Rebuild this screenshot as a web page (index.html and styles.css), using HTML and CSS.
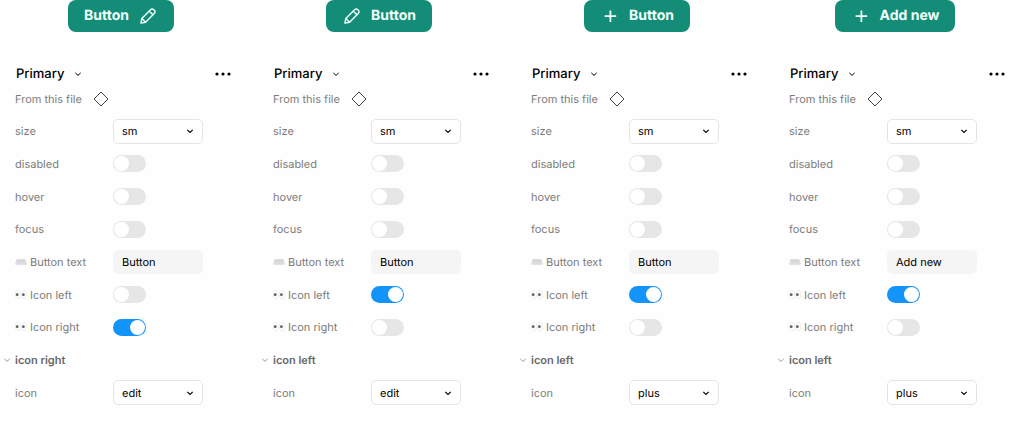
FILE: index.html
```html
<!DOCTYPE html>
<html lang="en">
<head>
<meta charset="utf-8">
<meta name="viewport" content="width=device-width, initial-scale=1">
<title>Button component properties</title>
<link rel="stylesheet" href="styles.css">
</head>
<body>
<svg class="sprite" aria-hidden="true">
  <symbol id="pencil" viewBox="-2 -2 20 20"><path d="M.9 15.100l.9-4.700L10.800 1.500a1.900 1.900 0 0 1 2.700 0l1 1a1.900 1.900 0 0 1 0 2.700L5.600 14.200zM9.200 3.100l3.700 3.700M1.800 10.400l3.800 3.800"/></symbol>
  <symbol id="plus" viewBox="-2 -2 20 20"><path d="M8.400 2.400v11.600M2.600 8.200h11.600"/></symbol>
  <symbol id="chevron" viewBox="0 0 8 8"><path d="M1.300 2.900L4 5.400l2.700-2.500"/></symbol>
  <symbol id="dots" viewBox="0 0 16 4"><circle cx="2" cy="2" r="1.600"/><circle cx="8" cy="2" r="1.600"/><circle cx="14" cy="2" r="1.600"/></symbol>
  <symbol id="diamond" viewBox="0 0 16 16"><path d="M8 1l7 7-7 7-7-7z"/></symbol>
  <symbol id="keyboard" viewBox="0 0 12 12"><path d="M1.500 3h9l1.200 4.500H.3z" fill="#e2e2e2"/><path d="M.3 7.500h11.400v1H.3z" fill="#c8c8c8"/><path d="M2 4.200h8M1.700 5.700h8.600" fill="none" stroke="#c0c0c0" stroke-width=".7" stroke-dasharray="1 .5"/></symbol>
  <symbol id="eyes" viewBox="0 0 12 12"><g fill="#fcfcfc" stroke="#e2e2e2" stroke-width=".6"><ellipse cx="3" cy="5.500" rx="2.500" ry="4.200"/><ellipse cx="9.200" cy="5.500" rx="2.500" ry="4.200"/></g><g fill="#606060"><circle cx="2.200" cy="5.700" r="1.400"/><circle cx="8.400" cy="5.700" r="1.400"/></g></symbol>
</svg>
<main class="board">
  <section class="variant">
    <button class="btn" type="button">Button<svg class="btn-icon"><use href="#pencil"/></svg></button>
    <header class="head">
      <button class="title" type="button">Primary<svg class="chevron"><use href="#chevron"/></svg></button>
      <button class="more" type="button" aria-label="More"><svg class="dots"><use href="#dots"/></svg></button>
    </header>
    <p class="source">From this file<svg class="diamond"><use href="#diamond"/></svg></p>
    <div class="rows">
      <div class="row"><label for="size1">size</label><span class="select"><select id="size1"><option>sm</option></select><svg class="chevron"><use href="#chevron"/></svg></span></div>
      <div class="row"><label for="disabled1">disabled</label><input class="toggle" id="disabled1" type="checkbox" role="switch"></div>
      <div class="row"><label for="hover1">hover</label><input class="toggle" id="hover1" type="checkbox" role="switch"></div>
      <div class="row"><label for="focus1">focus</label><input class="toggle" id="focus1" type="checkbox" role="switch"></div>
      <div class="row"><label for="text1"><svg class="glyph"><use href="#keyboard"/></svg>Button text</label><input class="field" id="text1" type="text" value="Button"></div>
      <div class="row"><label for="left1"><svg class="glyph"><use href="#eyes"/></svg>Icon left</label><input class="toggle" id="left1" type="checkbox" role="switch"></div>
      <div class="row"><label for="right1"><svg class="glyph"><use href="#eyes"/></svg>Icon right</label><input class="toggle" id="right1" type="checkbox" role="switch" checked></div>
      <button class="group" type="button"><svg class="chevron"><use href="#chevron"/></svg>icon right</button>
      <div class="row"><label for="icon1">icon</label><span class="select"><select id="icon1"><option>edit</option></select><svg class="chevron"><use href="#chevron"/></svg></span></div>
    </div>
  </section>
  <section class="variant">
    <button class="btn" type="button"><svg class="btn-icon"><use href="#pencil"/></svg>Button</button>
    <header class="head">
      <button class="title" type="button">Primary<svg class="chevron"><use href="#chevron"/></svg></button>
      <button class="more" type="button" aria-label="More"><svg class="dots"><use href="#dots"/></svg></button>
    </header>
    <p class="source">From this file<svg class="diamond"><use href="#diamond"/></svg></p>
    <div class="rows">
      <div class="row"><label for="size2">size</label><span class="select"><select id="size2"><option>sm</option></select><svg class="chevron"><use href="#chevron"/></svg></span></div>
      <div class="row"><label for="disabled2">disabled</label><input class="toggle" id="disabled2" type="checkbox" role="switch"></div>
      <div class="row"><label for="hover2">hover</label><input class="toggle" id="hover2" type="checkbox" role="switch"></div>
      <div class="row"><label for="focus2">focus</label><input class="toggle" id="focus2" type="checkbox" role="switch"></div>
      <div class="row"><label for="text2"><svg class="glyph"><use href="#keyboard"/></svg>Button text</label><input class="field" id="text2" type="text" value="Button"></div>
      <div class="row"><label for="left2"><svg class="glyph"><use href="#eyes"/></svg>Icon left</label><input class="toggle" id="left2" type="checkbox" role="switch" checked></div>
      <div class="row"><label for="right2"><svg class="glyph"><use href="#eyes"/></svg>Icon right</label><input class="toggle" id="right2" type="checkbox" role="switch"></div>
      <button class="group" type="button"><svg class="chevron"><use href="#chevron"/></svg>icon left</button>
      <div class="row"><label for="icon2">icon</label><span class="select"><select id="icon2"><option>edit</option></select><svg class="chevron"><use href="#chevron"/></svg></span></div>
    </div>
  </section>
  <section class="variant">
    <button class="btn" type="button"><svg class="btn-icon bold"><use href="#plus"/></svg>Button</button>
    <header class="head">
      <button class="title" type="button">Primary<svg class="chevron"><use href="#chevron"/></svg></button>
      <button class="more" type="button" aria-label="More"><svg class="dots"><use href="#dots"/></svg></button>
    </header>
    <p class="source">From this file<svg class="diamond"><use href="#diamond"/></svg></p>
    <div class="rows">
      <div class="row"><label for="size3">size</label><span class="select"><select id="size3"><option>sm</option></select><svg class="chevron"><use href="#chevron"/></svg></span></div>
      <div class="row"><label for="disabled3">disabled</label><input class="toggle" id="disabled3" type="checkbox" role="switch"></div>
      <div class="row"><label for="hover3">hover</label><input class="toggle" id="hover3" type="checkbox" role="switch"></div>
      <div class="row"><label for="focus3">focus</label><input class="toggle" id="focus3" type="checkbox" role="switch"></div>
      <div class="row"><label for="text3"><svg class="glyph"><use href="#keyboard"/></svg>Button text</label><input class="field" id="text3" type="text" value="Button"></div>
      <div class="row"><label for="left3"><svg class="glyph"><use href="#eyes"/></svg>Icon left</label><input class="toggle" id="left3" type="checkbox" role="switch" checked></div>
      <div class="row"><label for="right3"><svg class="glyph"><use href="#eyes"/></svg>Icon right</label><input class="toggle" id="right3" type="checkbox" role="switch"></div>
      <button class="group" type="button"><svg class="chevron"><use href="#chevron"/></svg>icon left</button>
      <div class="row"><label for="icon3">icon</label><span class="select"><select id="icon3"><option>plus</option></select><svg class="chevron"><use href="#chevron"/></svg></span></div>
    </div>
  </section>
  <section class="variant">
    <button class="btn" type="button"><svg class="btn-icon bold"><use href="#plus"/></svg>Add new</button>
    <header class="head">
      <button class="title" type="button">Primary<svg class="chevron"><use href="#chevron"/></svg></button>
      <button class="more" type="button" aria-label="More"><svg class="dots"><use href="#dots"/></svg></button>
    </header>
    <p class="source">From this file<svg class="diamond"><use href="#diamond"/></svg></p>
    <div class="rows">
      <div class="row"><label for="size4">size</label><span class="select"><select id="size4"><option>sm</option></select><svg class="chevron"><use href="#chevron"/></svg></span></div>
      <div class="row"><label for="disabled4">disabled</label><input class="toggle" id="disabled4" type="checkbox" role="switch"></div>
      <div class="row"><label for="hover4">hover</label><input class="toggle" id="hover4" type="checkbox" role="switch"></div>
      <div class="row"><label for="focus4">focus</label><input class="toggle" id="focus4" type="checkbox" role="switch"></div>
      <div class="row"><label for="text4"><svg class="glyph"><use href="#keyboard"/></svg>Button text</label><input class="field" id="text4" type="text" value="Add new"></div>
      <div class="row"><label for="left4"><svg class="glyph"><use href="#eyes"/></svg>Icon left</label><input class="toggle" id="left4" type="checkbox" role="switch" checked></div>
      <div class="row"><label for="right4"><svg class="glyph"><use href="#eyes"/></svg>Icon right</label><input class="toggle" id="right4" type="checkbox" role="switch"></div>
      <button class="group" type="button"><svg class="chevron"><use href="#chevron"/></svg>icon left</button>
      <div class="row"><label for="icon4">icon</label><span class="select"><select id="icon4"><option>plus</option></select><svg class="chevron"><use href="#chevron"/></svg></span></div>
    </div>
  </section>
</main>
</body>
</html>
```
FILE: styles.css
```css
* { box-sizing: border-box; }

body {
  margin: 0;
  background: #fefefe;
  color: #111;
  font: 11px/16px Inter, "Liberation Sans", sans-serif;
  text-rendering: geometricPrecision;
}

button, input, select {
  margin: 0;
  padding: 0;
  border: 0;
  background: none;
  color: inherit;
  font: inherit;
  text-rendering: inherit;
}

svg {
  flex: none;
  fill: none;
  stroke: currentColor;
}

.sprite {
  position: absolute;
  width: 0;
  height: 0;
}

.board {
  display: grid;
  grid-template-columns: repeat(4, minmax(0, 1fr));
  column-gap: 16px;
  min-height: 100vh;
  padding-bottom: 17px;
}

.variant {
  display: flex;
  flex-direction: column;
}

.btn {
  display: flex;
  align-items: center;
  align-self: center;
  gap: 9px;
  height: 32px;
  padding: 0 16px;
  border-radius: 8px;
  background: #138d78;
  color: #f2fffc;
  font-size: 14px;
  font-weight: 700;
}

.btn-icon {
  width: 20px;
  height: 20px;
  stroke-width: 1.4;
  stroke-linejoin: round;
}

.bold { stroke-width: 1.8; }

.head {
  display: flex;
  align-items: center;
  justify-content: space-between;
  margin-top: 32px;
  padding: 0 11px 0 16px;
}

.title {
  display: flex;
  align-items: center;
  gap: 10px;
  height: 20px;
  color: #000;
  font-size: 13px;
  font-weight: 500;
}

.chevron {
  width: 8px;
  height: 8px;
}

.more {
  display: flex;
  align-items: center;
  height: 20px;
  color: #000;
}

.dots {
  width: 16px;
  height: 4px;
  fill: currentColor;
  stroke: none;
}

.source {
  display: flex;
  align-items: center;
  gap: 11px;
  margin: 7px 0 8px;
  padding-left: 15px;
  color: #7c7c7c;
}

.diamond {
  width: 16px;
  height: 16px;
  color: #444;
}

.rows {
  display: grid;
  flex: 1;
  grid-auto-rows: minmax(26px, 1fr);
}

.row {
  display: grid;
  grid-template-columns: 98px minmax(0, 90px);
  align-items: center;
  padding-left: 15px;
}

.row label {
  display: flex;
  align-items: center;
  gap: 3px;
  color: #7c7c7c;
}

.glyph {
  width: 12px;
  height: 12px;
  stroke: none;
}

.select {
  display: grid;
  align-items: center;
}

.select select {
  grid-area: 1 / 1;
  width: 100%;
  height: 25px;
  padding: 0 24px 0 8px;
  border: 1px solid #e4e4e4;
  border-radius: 5px;
  appearance: none;
  background: #fff;
  color: #000;
}

.select .chevron {
  grid-area: 1 / 1;
  justify-self: end;
  margin-right: 9px;
  color: #000;
  stroke-width: 1.2;
  pointer-events: none;
}

.field {
  width: 100%;
  height: 24px;
  padding: 0 9px;
  border-radius: 5px;
  background: #f5f5f5;
  color: #000;
}

.toggle {
  display: flex;
  width: 33px;
  height: 17px;
  padding: 1px;
  border-radius: 9px;
  appearance: none;
  background: #e6e6e6;
}

.toggle::before {
  width: 15px;
  height: 15px;
  border-radius: 50%;
  background: #fff;
  content: "";
}

.toggle:checked {
  justify-content: flex-end;
  background: #1294fb;
}

.group {
  display: flex;
  align-items: center;
  gap: 4px;
  padding-left: 3px;
  color: #686868;
  font-weight: 600;
}

.group .chevron { color: #999; }
```
